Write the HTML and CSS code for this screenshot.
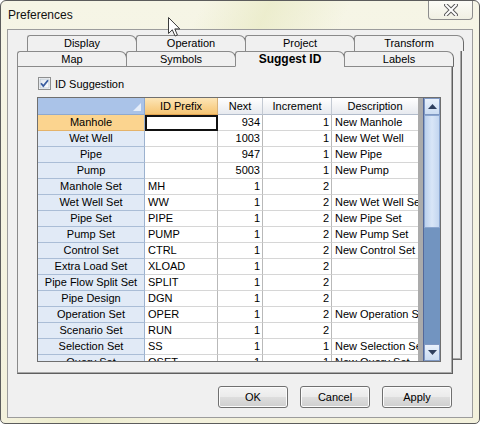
FILE: index.html
```html
<!DOCTYPE html>
<html lang="en">
  <head>
    <meta charset="UTF-8" />
    <title>Preferences</title>
    <link rel="stylesheet" href="styles.css">
  </head>
  <body>
    <div class="window">
      <div class="titlebar">
        <span class="title">Preferences</span>
        <div class="close-btn">
          <svg width="14" height="12" viewBox="0 0 14 12">
            <path d="M2 1 L12 11 M12 1 L2 11" stroke="#5a5a5a" stroke-width="4" stroke-linecap="square" fill="none"/>
            <path d="M2 1 L12 11 M12 1 L2 11" stroke="#ffffff" stroke-width="2" stroke-linecap="square" fill="none"/>
          </svg>
        </div>
      </div>

      <div class="client">
        <div class="tabs">
          <div class="tab-row back">
            <div class="tab">Display</div>
            <div class="tab">Operation</div>
            <div class="tab">Project</div>
            <div class="tab">Transform</div>
          </div>
          <div class="back-body">
            <div class="tab-row front">
              <div class="tab">Map</div>
              <div class="tab">Symbols</div>
              <div class="tab active">Suggest ID</div>
              <div class="tab">Labels</div>
            </div>
            <div class="panel">
              <label class="check-row">
                <svg class="checkbox" width="13" height="13" viewBox="0 0 13 13">
                  <defs>
                    <linearGradient id="cb" x1="0" y1="0" x2="1" y2="1">
                      <stop offset="0" stop-color="#dfe6ee"/>
                      <stop offset="1" stop-color="#ffffff"/>
                    </linearGradient>
                  </defs>
                  <rect x="0.5" y="0.5" width="12" height="12" fill="#fff" stroke="#8e8f8f"/>
                  <rect x="2" y="2" width="9" height="9" fill="url(#cb)" stroke="#b7c2ce" stroke-width="0.8"/>
                  <path d="M3 6.2 L5.3 9 L10 3.2" stroke="#3a5da0" stroke-width="1.8" fill="none"/>
                </svg>
                ID Suggestion
              </label>

              <div class="grid">
                <div class="grid-view">
                  <table>
                    <colgroup>
                      <col class="c-row"><col class="c-pre"><col class="c-next"><col class="c-inc"><col class="c-desc">
                    </colgroup>
                    <thead>
                      <tr>
                        <th class="corner"></th>
                        <th class="hdr sel">ID Prefix</th>
                        <th class="hdr">Next</th>
                        <th class="hdr">Increment</th>
                        <th class="hdr">Description</th>
                      </tr>
                    </thead>
                    <tbody>
                      <tr><th class="rh sel">Manhole</th><td class="current"></td><td class="num">934</td><td class="num">1</td><td>New Manhole</td></tr>
                      <tr><th class="rh">Wet Well</th><td></td><td class="num">1003</td><td class="num">1</td><td>New Wet Well</td></tr>
                      <tr><th class="rh">Pipe</th><td></td><td class="num">947</td><td class="num">1</td><td>New Pipe</td></tr>
                      <tr><th class="rh">Pump</th><td></td><td class="num">5003</td><td class="num">1</td><td>New Pump</td></tr>
                      <tr><th class="rh">Manhole Set</th><td>MH</td><td class="num">1</td><td class="num">2</td><td></td></tr>
                      <tr><th class="rh">Wet Well Set</th><td>WW</td><td class="num">1</td><td class="num">2</td><td>New Wet Well Set</td></tr>
                      <tr><th class="rh">Pipe Set</th><td>PIPE</td><td class="num">1</td><td class="num">2</td><td>New Pipe Set</td></tr>
                      <tr><th class="rh">Pump Set</th><td>PUMP</td><td class="num">1</td><td class="num">2</td><td>New Pump Set</td></tr>
                      <tr><th class="rh">Control Set</th><td>CTRL</td><td class="num">1</td><td class="num">2</td><td>New Control Set</td></tr>
                      <tr><th class="rh">Extra Load Set</th><td>XLOAD</td><td class="num">1</td><td class="num">2</td><td></td></tr>
                      <tr><th class="rh">Pipe Flow Split Set</th><td>SPLIT</td><td class="num">1</td><td class="num">2</td><td></td></tr>
                      <tr><th class="rh">Pipe Design</th><td>DGN</td><td class="num">1</td><td class="num">2</td><td></td></tr>
                      <tr><th class="rh">Operation Set</th><td>OPER</td><td class="num">1</td><td class="num">2</td><td>New Operation Set</td></tr>
                      <tr><th class="rh">Scenario Set</th><td>RUN</td><td class="num">1</td><td class="num">2</td><td></td></tr>
                      <tr><th class="rh">Selection Set</th><td>SS</td><td class="num">1</td><td class="num">1</td><td>New Selection Set</td></tr>
                      <tr><th class="rh">Query Set</th><td>QSET</td><td class="num">1</td><td class="num">1</td><td>New Query Set</td></tr>
                    </tbody>
                  </table>
                </div>
                <div class="grid-gap"></div>
                <div class="vscroll">
                  <div class="sb-btn">
                    <svg width="9" height="5" viewBox="0 0 9 5"><path d="M0 5 L4.5 0 L9 5 Z" fill="#2e3f5e"/></svg>
                  </div>
                  <div class="sb-thumb"></div>
                  <div class="sb-track"></div>
                  <div class="sb-btn">
                    <svg width="9" height="5" viewBox="0 0 9 5"><path d="M0 0 L9 0 L4.5 5 Z" fill="#2e3f5e"/></svg>
                  </div>
                </div>
              </div>
            </div>
          </div>
        </div>

        <div class="buttons">
          <button>OK</button>
          <button>Cancel</button>
          <button>Apply</button>
        </div>
      </div>

      <svg class="cursor" width="13" height="21" viewBox="0 0 13 21">
        <path d="M0.5 0.5 L0.5 16.5 L4.3 12.8 L7 19 L9.4 18 L6.8 11.9 L11.8 11.9 Z" fill="#ffffff" stroke="#3c3c3c" stroke-width="1"/>
      </svg>
    </div>
  </body>
</html>
```

FILE: styles.css
```css
* {
  box-sizing: border-box;
}

body {
  margin: 0;
  font-family: "Liberation Sans", Arial, sans-serif;
  font-size: 11px;
  color: #000;
}

.window {
  position: relative;
  width: 480px;
  height: 424px;
  border: 1px solid #5c5c5c;
  border-radius: 6px 6px 5px 5px;
  background:
    linear-gradient(115deg, rgba(255, 255, 255, 0) 30%, rgba(230, 232, 190, 0.6) 40%, rgba(255, 255, 255, 0) 52%),
    linear-gradient(180deg, #f6f5e6 0%, #f3f1dc 100%);
  overflow: hidden;
}

.titlebar {
  height: 28px;
  display: flex;
  align-items: center;
  padding-left: 7px;
}

.title {
  font-size: 12px;
  color: #111;
}

.close-btn {
  margin-left: auto;
  margin-right: 6px;
  align-self: flex-start;
  margin-top: -1px;
  width: 45px;
  height: 20px;
  border: 1px solid #8d8d8d;
  border-top: none;
  border-radius: 0 0 4px 4px;
  background: linear-gradient(180deg, rgba(255, 255, 255, 0.7), rgba(235, 235, 225, 0.5));
  display: flex;
  align-items: center;
  justify-content: center;
}

.client {
  margin-left: 6px;
  width: 466px;
  height: 389px;
  border: 1px solid #9c9c9c;
  background: #f0f0f0;
}

.tabs {
  padding: 5px 0 0 9px;
}

.tab-row {
  display: flex;
}

.tab-row.back {
  margin-left: 10px;
}

.tab-row.front {
  margin-left: -10px;
}

.tab {
  width: 110px;
  height: 16px;
  margin-left: -1px;
  border: 1px solid #8a8a8a;
  border-right-color: #6a6a6a;
  border-bottom: none;
  border-radius: 3px 7px 0 0;
  background: #f0f0f0;
  text-align: center;
  line-height: 14px;
  font-size: 11px;
}

.tab:first-child {
  margin-left: 0;
}

.front .tab {
  border-bottom: 1px solid #8a8a8a;
}

.front .tab.active {
  border-bottom-color: #f0f0f0;
  font-weight: bold;
  font-size: 12px;
}

.back-body {
  margin-left: 10px;
  width: 435px;
  height: 309px;
  border-right: 1px solid #6a6a6a;
  border-bottom: 1px solid #6a6a6a;
  box-shadow: inset -1px -1px 0 #a8a8a8;
}

.panel {
  margin-left: -10px;
  width: 436px;
  height: 307px;
  border-left: 1px solid #8a8a8a;
  border-right: 1px solid #5f5f5f;
  border-bottom: 1px solid #5f5f5f;
  box-shadow: inset -1px -1px 0 #a8a8a8;
  background: #f0f0f0;
  padding: 10px 0 0 19px;
}

.check-row {
  display: flex;
  align-items: center;
  gap: 4px;
  height: 13px;
  font-size: 11px;
  margin-left: 1px;
}

.grid {
  margin-top: 7px;
  width: 404px;
  height: 265px;
  border: 1px solid #6f6f6f;
  display: flex;
}

.grid-view {
  width: 380px;
  overflow: hidden;
  background: #fff;
}

.grid-gap {
  width: 5px;
  background: #ababab;
}

table {
  table-layout: fixed;
  width: 380px;
  border-collapse: separate;
  border-spacing: 0;
}

.c-row { width: 107px; }
.c-pre { width: 73px; }
.c-next { width: 45px; }
.c-inc { width: 69px; }
.c-desc { width: 86px; }

th, td {
  padding: 0;
  font-size: 11px;
  white-space: nowrap;
  overflow: hidden;
  font-weight: normal;
}

thead th {
  height: 17px;
  line-height: 16px;
  border-right: 1px solid #c3c9d2;
  border-bottom: 1px solid #b2bccb;
  background: linear-gradient(180deg, #ffffff 0%, #f3f4f6 50%, #e7eaef 100%);
  text-align: center;
}

thead th:last-child {
  border-right: none;
}

thead th.corner {
  position: relative;
  background: #aac3e8;
  border-right: 1px solid #8ea9d0;
  border-bottom: 1px solid #8ea9d0;
}

thead th.corner::after {
  content: "";
  position: absolute;
  right: 3px;
  bottom: 3px;
  border-style: solid;
  border-width: 0 0 8px 8px;
  border-color: transparent transparent #e6eefa transparent;
}

thead th.sel {
  background: linear-gradient(180deg, #fde6b8 0%, #f9d390 55%, #f6c574 100%);
  border-bottom: 1px solid #e4a650;
  border-right: 1px solid #d8b27a;
}

tbody th, tbody td {
  height: 16px;
  line-height: 15px;
}

th.rh {
  text-align: center;
  background: #e1eaf6;
  border-right: 1px solid #9cb2cf;
  border-bottom: 1px solid #aabdd6;
}

th.rh.sel {
  background: #fbd48f;
  border-bottom-color: #e4b36a;
}

tbody td {
  border-right: 1px solid #b9b9b9;
  border-bottom: 1px solid #d6d6d6;
  padding-left: 3px;
  text-overflow: clip;
}

tbody td:last-child {
  border-right: none;
}

tbody td.num {
  text-align: right;
  padding: 0 2px 0 0;
}

td.current {
  outline: 2px solid #111;
  outline-offset: -2px;
}

.vscroll {
  width: 17px;
  display: flex;
  flex-direction: column;
  border-left: 1px solid #54699a;
  background: #7394c0;
}

.sb-btn {
  height: 17px;
  display: flex;
  align-items: center;
  justify-content: center;
  background: linear-gradient(180deg, #e9f1fb, #cbdcf2);
  border: 1px solid #7f98c2;
}

.sb-thumb {
  height: 113px;
  background: linear-gradient(90deg, #bcd1ee, #d9e6f7 50%, #c3d6f0);
  border: 1px solid #8ba6cf;
}

.sb-track {
  flex: 1;
  background: #7294c0;
}

.buttons {
  display: flex;
  justify-content: flex-end;
  gap: 12px;
  margin-top: 26px;
  padding-right: 20px;
}

button {
  width: 70px;
  height: 22px;
  font-family: "Liberation Sans", Arial, sans-serif;
  font-size: 11px;
  color: #000;
  border: 1px solid #707070;
  border-radius: 3px;
  background: linear-gradient(180deg, #f4f4f4 0%, #ebebeb 48%, #dddddd 52%, #cfcfcf 100%);
  box-shadow: inset 0 0 0 1px #fcfcfc;
  padding: 0;
}

.cursor {
  position: absolute;
  left: 167px;
  top: 16px;
}
```
